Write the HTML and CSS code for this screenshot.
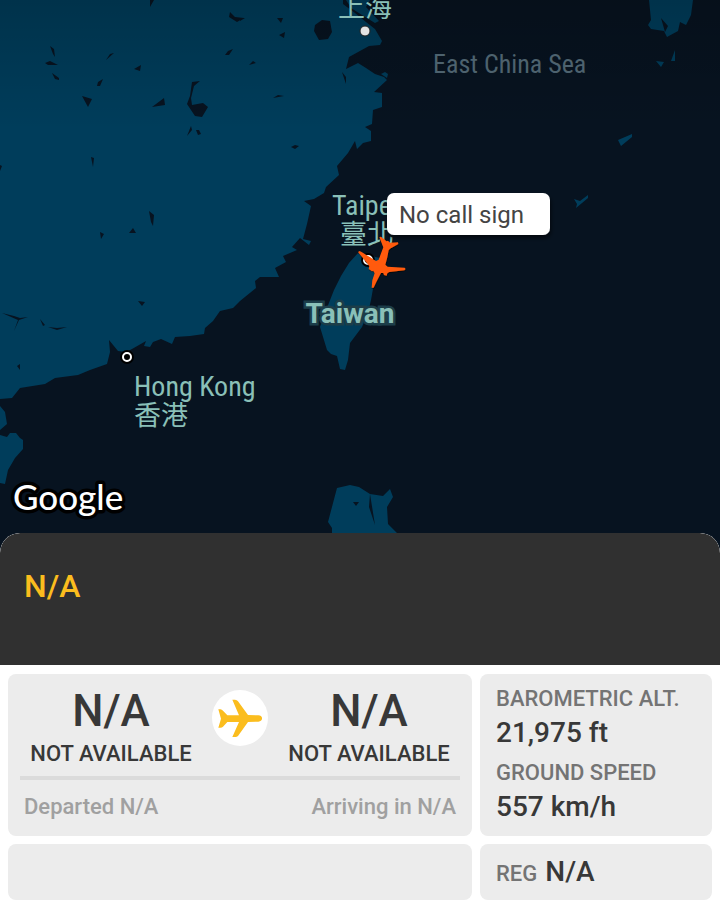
FILE: index.html
```html
<!DOCTYPE html>
<html lang="en">
<head>
<meta charset="utf-8">
<meta name="viewport" content="width=device-width, initial-scale=1">
<title>Flight details</title>
<link rel="stylesheet" href="styles.css">
</head>
<body>
<main class="app">
  <section class="map" aria-label="Map">
    <svg class="map-canvas" viewBox="0 0 720 557" preserveAspectRatio="xMidYMid slice">
      <defs>
        <linearGradient id="shade" x1="0" y1="0" x2="0" y2="1">
          <stop offset="0" stop-color="#000" stop-opacity=".18"/>
          <stop offset="1" stop-color="#000" stop-opacity="0"/>
        </linearGradient>
        <filter id="drop" x="-30%" y="-30%" width="160%" height="160%">
          <feDropShadow dx="1" dy="3" stdDeviation="2" flood-color="#000" flood-opacity=".6"/>
        </filter>
      </defs>
      <g class="land">
        <path d="M0 0H343V4L355 13 366 22 375 29 382 41 380 45 369 46 349 57 346 69 358 63 366 68 375 74 384 77 387 80 374 92 382 93V107L373 110 372 124 365 127 371 131V141L363 143 357 149 355 141 348 153 337 166 339 175 326 187 324 193 314 199 304 201 311 206 307 224 303 239 311 241 309 245 300 238 292 247 297 250 283 256 286 262 275 268 279 277 260 277 255 281 256 288 240 301 233 308 220 311 213 321 205 328 204 334 190 336 175 337 172 344 161 339 153 342 150 347 144 346 146 341 132 349 126 352 118 351 109 340 110 352 107 364 90 370 78 375 55 378 45 384 20 388 12 398 0 399Z"/>
        <path d="M346 0H370L366 7 379 21 375 23 362 15 351 8Z"/>
        <path d="M381 74L385 72 388 74 387 78Z"/>
        <path d="M0 406L5 412 7 424 0 430ZM0 435L7 437 10 433 16 433 20 438 23 440V449L15 458 8 470 5 484 0 483Z"/>
        <path d="M358 253L349 263 341 276 334 290 325 313 320 327 327 350 331 354 337 356 340 369 345 370 348 360 350 343 362 327 368 313 371 300 376 272 380 258Z"/>
        <path d="M337 488L350 485 359 487 370 494 383 496 390 489 393 497 387 507 388 524 397 533V557H332V528L328 522Z"/>
        <path d="M649 0L651 20 648 25 651 29 664 31 667 37 678 31 680 22 686 25 691 15 693 0Z"/>
        <path d="M618 140L632 134 632 137 621 146ZM574 199L580 201 588 195 588 198 576 208 577 204ZM671 61L675 50 675 61ZM656 61L664 62 661 67Z"/>
      </g>
      <g class="lake">
        <path d="M315 25L322 20 330 21 332 32 328 39 319 40 314 31Z"/>
        <path d="M192 82L200 81 194 86 191 98 192 105 203 103 208 107 202 117 195 116 187 104 190 96Z"/>
        <path d="M150 0H154L150 7ZM230 12L235 17 244 18 237 22 229 17ZM225 55L228 51 233 49 229 55ZM50 46L54 49 55 57 53 54ZM45 63L50 61 58 65 48 65ZM52 73L59 78 59 80 55 79ZM106 60L110 54 114 53ZM134 69L141 65 140 71ZM97 86L98 82 103 79 100 86ZM82 96L92 99 88 107ZM152 107L160 101 164 98 165 105ZM187 136L191 126 192 130ZM196 130L199 130 201 134 198 135ZM91 157L94 158 93 167ZM0 165L2 166 0 171Z"/>
        <path d="M277 18H283L281 23ZM279 35L285 32 284 38ZM249 65L253 61 256 63ZM273 98L278 95 284 96ZM291 147L295 145 299 146 295 149ZM342 72L346 77 346 84ZM240 18L245 18 240 21Z"/>
        <path d="M149 211L154 215 153 226 151 222ZM129 233L133 228 136 233ZM100 232L104 234 101 239ZM138 301L145 302 142 306ZM2 313L14 316 20 318 28 317 19 320 14 331 18 320ZM40 319L45 325 43 326ZM48 327L57 328 67 327 57 330ZM17 366L20 364 20 370Z"/>
        <path d="M353 502H359L356 506ZM370 494L375 525 369 507ZM661 18L668 26 665 32Z"/>
      </g>
      <rect width="720" height="130" fill="url(#shade)"/>

      <circle class="dot-solid" cx="365" cy="31" r="5"/>
      <circle cx="127" cy="357" r="7"/>
      <circle class="dot-ring" cx="127" cy="357" r="4"/>
      <circle cx="368" cy="260" r="7"/>
      <circle class="dot-ring" cx="368" cy="260" r="4"/>

      <text class="place cjk" x="338" y="17">上海</text>
      <text class="place sea" x="433" y="73">East China Sea</text>
      <text class="place" x="332" y="215">Taipei</text>
      <text class="place cjk" x="340" y="244">臺北</text>
      <text class="place country" x="350" y="323">Taiwan</text>
      <text class="place" x="134" y="396">Hong Kong</text>
      <text class="place cjk" x="134" y="425">香港</text>
      <text class="brand" x="13" y="510">Google</text>

      <g class="callout" filter="url(#drop)">
        <rect x="387" y="193" width="163" height="42" rx="7"/>
      </g>
      <text class="callout-text" x="399" y="223">No call sign</text>
      <g transform="translate(240 180) scale(.3333)">
        <path class="aircraft" filter="url(#drop)" d="M395 323L397 301 404 280 400 272 396 274 391 270 386 267 388 259 382 250 354 216 359 213 366 217 408 243 416 239 430 202 418 171 423 170 440 184 444 182 450 188 474 187 475 192 450 206 446 211 442 232 436 254 443 260 494 263 497 267 493 271 448 276 442 280 440 287 432 285 430 279 423 279 409 306 401 323Z"/>
      </g>
    </svg>
  </section>

  <section class="sheet">
    <header class="sheet-head"><h1>N/A</h1></header>
    <div class="cards">
      <article class="card route">
        <div class="route-ends">
          <div class="airport"><strong>N/A</strong><span>NOT AVAILABLE</span></div>
          <svg class="route-icon" viewBox="0 0 168 168" aria-hidden="true">
            <circle cx="84" cy="84" r="84" fill="#fff"/>
            <path fill="#fbbd1e" d="M139 76C154 77 154 94 139 95L108 96 78 138Q75 141 70 141H61L81 96H46L33 110Q30 113 25 113H19L27 86 19 58H25Q30 59 33 62L46 76H81L61 29H69Q75 30 78 34L108 75Z"/>
          </svg>
          <div class="airport"><strong>N/A</strong><span>NOT AVAILABLE</span></div>
        </div>
        <div class="route-times"><span>Departed N/A</span><span>Arriving in N/A</span></div>
      </article>
      <dl class="card stats">
        <div><dt>BAROMETRIC ALT.</dt><dd>21,975 ft</dd></div>
        <div><dt>GROUND SPEED</dt><dd>557 km/h</dd></div>
      </dl>
      <div class="card"></div>
      <dl class="card registration"><dt>REG</dt><dd>N/A</dd></dl>
    </div>
  </section>
</main>
</body>
</html>
```
FILE: styles.css
```css
* {
  box-sizing: border-box;
}

body,
h1,
dl,
dd {
  margin: 0;
}

body {
  font-family: Roboto, "Noto Sans CJK TC", sans-serif;
  font-weight: 500;
  color: #383838;
  background: #071320;
}

.app {
  display: flex;
  flex-direction: column;
  min-height: 100vh;
}

/* Map */
.map {
  position: relative;
  flex: 1;
  min-height: 320px;
  margin-bottom: -24px;
}

.map-canvas {
  position: absolute;
  inset: 0;
  width: 100%;
  height: 100%;
}

.land {
  fill: #003d5b;
}

.lake {
  fill: #071320;
}

.dot-solid {
  fill: #e4e4e4;
  stroke: #222;
  stroke-width: 1;
}

.dot-ring {
  fill: #000;
  stroke: #fff;
  stroke-width: 2;
}

.place {
  font-family: "Roboto Condensed", Roboto, sans-serif;
  font-size: 28px;
  font-weight: 400;
  fill: #8ac0b8;
}

.cjk {
  font-family: "Noto Sans CJK TC", sans-serif;
  font-size: 27px;
}

.sea {
  font-size: 26px;
  fill: #4d626e;
}

.country {
  font-family: Roboto, sans-serif;
  font-weight: 700;
  text-anchor: middle;
  stroke: #1c3d49;
  stroke-width: 5px;
  paint-order: stroke;
}

.brand {
  font-family: Lato, sans-serif;
  font-size: 35px;
  font-weight: 500;
  fill: #fff;
  stroke: #000;
  stroke-width: 7px;
  stroke-linejoin: round;
  paint-order: stroke;
}

.callout {
  fill: #fff;
}

.callout-text {
  font-size: 24px;
  font-weight: 400;
  fill: #444;
}

.aircraft {
  fill: #ff5a0a;
}

/* Bottom sheet */
.sheet {
  position: relative;
  overflow: hidden;
  border-radius: 20px 20px 0 0;
  background: #fff;
}

.sheet-head {
  min-height: 132px;
  padding: 33px 24px;
  border-radius: 20px 20px 0 0;
  background: #303030;
}

.sheet-head h1 {
  font-size: 32px;
  font-weight: 500;
  line-height: 40px;
  color: #fbbd1e;
}

.cards {
  display: grid;
  grid-template-columns: 2fr 1fr;
  gap: 8px;
  padding: 9px 8px 6px;
}

.card {
  min-height: 56px;
  border-radius: 8px;
  background: #ececec;
}

.route {
  padding: 13px 12px 15px;
}

.route-ends {
  display: grid;
  grid-template-columns: 1fr 56px 1fr;
  gap: 10px;
  padding-bottom: 7px;
  border-bottom: 4px solid #dbdbdb;
}

.airport {
  display: flex;
  flex-direction: column;
  gap: 4px;
  text-align: center;
  white-space: nowrap;
}

.airport strong {
  font-size: 44px;
  font-weight: 500;
  line-height: 48px;
}

.airport span {
  font-size: 22px;
  line-height: 30px;
}

.route-icon {
  width: 56px;
  height: 56px;
  margin-top: 3px;
}

.route-times {
  display: flex;
  justify-content: space-between;
  padding: 13px 4px 0;
  font-size: 22px;
  line-height: 28px;
  color: #a0a0a0;
}

.stats {
  display: flex;
  flex-direction: column;
  gap: 6px;
  padding: 11px 16px 9px;
  white-space: nowrap;
}

dt {
  font-size: 22px;
  line-height: 28px;
  color: #747474;
}

dd {
  font-size: 28px;
  line-height: 40px;
}

.registration {
  display: flex;
  align-items: baseline;
  gap: 8px;
  padding: 8px 16px;
}
```
